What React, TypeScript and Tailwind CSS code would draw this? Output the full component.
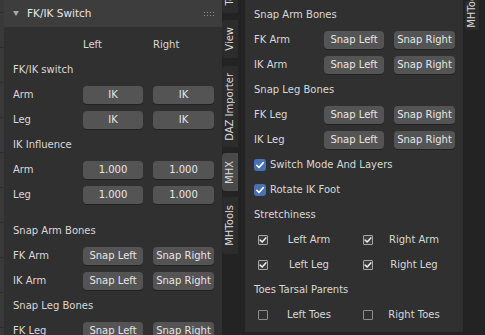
import type { ReactNode } from 'react';
import clsx from 'clsx';

function Btn({ children }: { children: ReactNode }) {
  return (
    <div className="flex h-[18px] items-center justify-center rounded-[4px] bg-[#545454] text-[#e6e6e6] shadow-[0_1px_0_rgba(0,0,0,0.3)]">
      {children}
    </div>
  );
}

function ButtonRow({ label, a, b }: { label: string; a: string; b: string }) {
  return (
    <div className="flex h-[25px] items-center">
      <span className="w-[70px]">{label}</span>
      <div className="w-[60px]"><Btn>{a}</Btn></div>
      <div className="ml-[10px] w-[61px]"><Btn>{b}</Btn></div>
    </div>
  );
}

function Label({ children }: { children: ReactNode }) {
  return <div className="flex h-[25px] items-center">{children}</div>;
}

function BlueCheck({ label }: { label: string }) {
  return (
    <div className="flex h-[25px] items-center">
      <span className="flex h-[12px] w-[12px] items-center justify-center rounded-[3px] bg-[#4772b3]">
        <svg width="12" height="12" viewBox="0 0 12 12">
          <path d="M2.8 6.3 L5 8.5 L9.3 3.6" fill="none" stroke="#fff" strokeWidth="1.6" strokeLinecap="round" strokeLinejoin="round" />
        </svg>
      </span>
      <span className="ml-[4px]">{label}</span>
    </div>
  );
}

function IconCheck({ label, on }: { label: string; on: boolean }) {
  return (
    <div className="flex items-center">
      <span
        className={clsx(
          'ml-[4px] flex h-[10px] w-[10px] shrink-0 items-center justify-center rounded-[1px] border',
          on ? 'border-[#a6a6a6] bg-[#3c3c3c]' : 'border-[#8c8c8c]'
        )}
      >
        {on && (
          <svg width="8" height="8" viewBox="0 0 8 8">
            <path d="M1.2 4.1 L3.2 6 L6.8 1.9" fill="none" stroke="#f0f0f0" strokeWidth="1.5" strokeLinecap="round" strokeLinejoin="round" />
          </svg>
        )}
      </span>
      <span className="flex-1 text-center">{label}</span>
    </div>
  );
}

function CheckPair({ a, b, on }: { a: string; b: string; on: boolean }) {
  return (
    <div className="grid h-[25px] grid-cols-2 items-center gap-x-[9px]">
      <IconCheck label={a} on={on} />
      <IconCheck label={b} on={on} />
    </div>
  );
}

function Tab({ label, active, className }: { label: string; active?: boolean; className: string }) {
  return (
    <div
      className={clsx(
        'flex w-[16px] shrink-0 items-center justify-center overflow-hidden rounded-l-[4px] text-[#dadada]',
        active ? 'bg-[#4a4a4a]' : 'bg-[#2c2c2c]',
        className
      )}
    >
      <span className="shrink-0 rotate-180 whitespace-nowrap leading-[12px] [writing-mode:vertical-rl]">{label}</span>
    </div>
  );
}

function SnapBones() {
  return (
    <>
      <Label>Snap Arm Bones</Label>
      <ButtonRow label="FK Arm" a="Snap Left" b="Snap Right" />
      <ButtonRow label="IK Arm" a="Snap Left" b="Snap Right" />
      <Label>Snap Leg Bones</Label>
      <ButtonRow label="FK Leg" a="Snap Left" b="Snap Right" />
    </>
  );
}

export default function App() {
  return (
    <div className="flex h-[335px] w-[485px] overflow-hidden bg-[#232323] font-['DejaVu_Sans',sans-serif] text-[10px] text-[#d8d8d8]">
      {/* viewport peeking out at the left */}
      <div className="w-[4px] shrink-0 bg-[#393939] bg-[repeating-linear-gradient(to_bottom,transparent_0px,transparent_12px,#2e2e2e_12px,#2e2e2e_13px,transparent_13px,transparent_35px)]" />

      {/* left panel */}
      <div className="flex w-[218px] shrink-0 flex-col bg-[#303030]">
        <div className="flex h-[27px] shrink-0 items-center bg-[#3d3d3d] pl-[9px] pr-[8px]">
          <svg width="6" height="5" viewBox="0 0 6 5">
            <polygon points="0,0 6,0 3,5" fill="#a8a8a8" />
          </svg>
          <span className="ml-[8px] text-[10.5px] text-[#e6e6e6]">FK/IK Switch</span>
          <svg className="ml-auto" width="10" height="4" viewBox="0 0 10 4">
            {[0, 3, 6, 9].map((x) => (
              <g key={x}>
                <rect x={x} y="0" width="1" height="1" fill="#8c8c8c" />
                <rect x={x} y="3" width="1" height="1" fill="#8c8c8c" />
              </g>
            ))}
          </svg>
        </div>
        <div className="flex flex-col pl-[9px] pr-[8px] pt-[5px]">
          <div className="flex h-[25px] items-center">
            <span className="ml-[70px] w-[60px]">Left</span>
            <span className="ml-[10px]">Right</span>
          </div>
          <Label>FK/IK switch</Label>
          <ButtonRow label="Arm" a="IK" b="IK" />
          <ButtonRow label="Leg" a="IK" b="IK" />
          <Label>IK Influence</Label>
          <ButtonRow label="Arm" a="1.000" b="1.000" />
          <ButtonRow label="Leg" a="1.000" b="1.000" />
          <div className="h-[11px]" />
          <SnapBones />
        </div>
      </div>

      {/* sidebar tabs */}
      <div className="flex w-[23px] shrink-0 flex-col">
        <Tab label="Tool" className="mt-[-22px] h-[35px]" />
        <Tab label="View" className="mt-[7px] h-[38px]" />
        <Tab label="DAZ Importer" className="mt-[8px] h-[81px]" />
        <Tab label="MHX" active className="mt-[6px] h-[38px]" />
        <Tab label="MHTools" className="mt-[6px] h-[57px]" />
      </div>

      {/* right panel, scrolled */}
      <div className="flex w-[218px] shrink-0 flex-col">
        <div className="flex flex-col bg-[#303030] pb-[5px] pl-[9px] pr-[8px] pt-[2px]">
          <SnapBones />
          <ButtonRow label="IK Leg" a="Snap Left" b="Snap Right" />
          <BlueCheck label="Switch Mode And Layers" />
          <BlueCheck label="Rotate IK Foot" />
          <Label>Stretchiness</Label>
          <CheckPair a="Left Arm" b="Right Arm" on />
          <CheckPair a="Left Leg" b="Right Leg" on />
          <Label>Toes Tarsal Parents</Label>
          <CheckPair a="Left Toes" b="Right Toes" on={false} />
        </div>
      </div>

      {/* far right tabs */}
      <div className="flex w-[22px] shrink-0 flex-col pl-[2px]">
        <div className="flex h-[30px] w-[14px] flex-col items-center justify-end overflow-hidden rounded-l-[4px] bg-[#2c2c2c] pb-[2px] text-[#dadada]">
          <span className="shrink-0 rotate-180 whitespace-nowrap leading-[12px] [writing-mode:vertical-rl]">MHTools</span>
        </div>
      </div>
    </div>
  );
}
